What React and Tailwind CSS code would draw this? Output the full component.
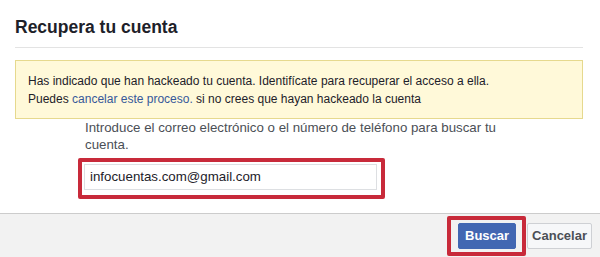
export default function App() {
  return (
    <div className="w-[600px] h-[257px] bg-white flex flex-col overflow-hidden font-['Liberation_Sans',Arial,sans-serif]">
      <div className="pl-[15px] pr-[17px] pt-[17px]">
        <h2 className="text-[17.5px] leading-[20px] font-bold text-[#1d2129] pb-[10px] border-b border-[#e3e3e3]">
          Recupera tu cuenta
        </h2>
        <div className="mt-[12px] border border-[#e6d98e] bg-[#fff9d9] pl-[12px] pr-[10px] pt-[11px] pb-[10px] text-[12px] leading-[18px] text-[#1d2129]">
          <div>Has indicado que han hackeado tu cuenta. Identifícate para recuperar el acceso a ella.</div>
          <div>
            Puedes <span className="text-[#365899]">cancelar este proceso.</span> si no crees que hayan hackeado la cuenta
          </div>
        </div>
      </div>
      <div className="ml-[85px] w-[430px] text-[13.3px] leading-[17px] text-[#4b4f56]">
        Introduce el correo electrónico o el número de teléfono para buscar tu cuenta.
      </div>
      <div className="ml-[84px] mt-[11px] relative w-[293px]">
        <div className="h-[26px] border border-[#dddfe2] bg-white pl-[5px] flex items-center text-[13.3px] text-[#1d2129]">
          infocuentas.com@gmail.com
        </div>
        <div className="absolute left-[-6px] right-[-8px] top-[-6px] bottom-[-9px] border-[4px] border-[#c82a3a] rounded-[2px]"></div>
      </div>
      <div className="mt-[23px] flex-1 bg-[#f2f2f2] border-t border-[#cccccc] flex justify-end items-start pt-[9px] pr-[8px]">
        <div className="relative">
          <button className="h-[26px] px-[6px] bg-[#4267b2] border border-[#4267b2] rounded-[2px] text-white text-[13px] font-bold leading-[24px]">
            Buscar
          </button>
          <div className="absolute left-[-11px] right-[-10px] top-[-7px] bottom-[-7px] border-[4px] border-[#c82a3a] rounded-[2px]"></div>
        </div>
        <button className="ml-[11px] h-[26px] px-[4px] bg-[#f6f7f9] border border-[#ced0d4] rounded-[2px] text-[#4b4f56] text-[13px] font-bold leading-[24px]">
          Cancelar
        </button>
      </div>
    </div>
  );
}
